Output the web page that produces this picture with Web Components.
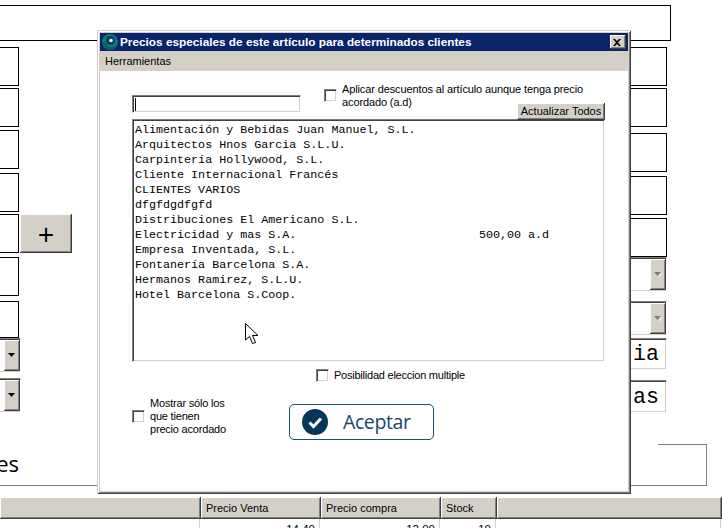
<!DOCTYPE html>
<html>
<head>
<meta charset="utf-8">
<title>Precios especiales</title>
<style>
  html, body { margin: 0; padding: 0; background: #fff; }
</style>
</head>
<body>
<x-app></x-app>

<script>
const SUNKEN = `
  border: 1px solid; border-color: #808080 #fff #fff #808080;
  box-shadow: inset 1px 1px #404040, inset -1px -1px #d4d0c8;
  box-sizing: border-box; background: #fff;`
const RAISED = `
  background: #d4d0c8; box-sizing: border-box;
  box-shadow: inset -1px -1px #404040, inset 1px 1px #fff, inset -2px -2px #808080;`
const UI_FONT = `font: 11px/13px "Liberation Sans", Arial, sans-serif; color: #000;`

// plain black-outlined field of the form behind the dialog
class XField extends HTMLElement {
  constructor() {
    super()
    this.attachShadow({ mode: 'open' })
    this.shadowRoot.innerHTML = `
      <style>
        :host { display: block; box-sizing: border-box; border: 1px solid #000; background: #fff; }
      </style>
      <slot></slot>
    `
  }
}

// sunken text box with a big monospace value, value is cut by the dialog
class XTextbox extends HTMLElement {
  constructor() {
    super()
    this.attachShadow({ mode: 'open' })
    this.shadowRoot.innerHTML = `
      <style>
        :host {
          display: flex; align-items: center; justify-content: flex-end;
          ${SUNKEN} padding: 2px 7px 0 0;
          font: 21.6px/1 "Liberation Mono", "Courier New", monospace; color: #000;
        }
      </style>
      <slot></slot>
    `
  }
}

class XCombo extends HTMLElement {
  constructor() {
    super()
    this.attachShadow({ mode: 'open' })
    const off = this.hasAttribute('disabled')
    this.shadowRoot.innerHTML = `
      <style>
        :host { display: block; ${SUNKEN} padding: 1px 0 1px 1px; }
        .row { display: flex; justify-content: flex-end; height: 100%; }
        .btn { ${RAISED} width: 16px; display: flex; align-items: center; justify-content: center; }
        .btn svg { display: block; }
      </style>
      <div class="row"><div class="btn">
        <svg width="8" height="5" viewBox="0 0 8 5">
          ${off ? '<path d="M7 1v1L4 5h1l3-3V1z" fill="#fff"/>' : ''}
          <path d="M0 0h7L3.500 4z" fill="${off ? '#808080' : '#000'}"/>
        </svg>
      </div></div>
    `
  }
}

class XCheck extends HTMLElement {
  constructor() {
    super()
    this.attachShadow({ mode: 'open' })
    this.shadowRoot.innerHTML = `
      <style>
        :host {
          display: flex; align-items: var(--check-align, center); ${UI_FONT} white-space: nowrap;
          letter-spacing: var(--check-spacing, 0);
        }
        .box { ${SUNKEN} width: 13px; height: 13px; flex: none; margin-right: 5px; margin-top: var(--check-top, 0); }
      </style>
      <div class="box"></div>
      <div><slot></slot></div>
    `
  }
}

class XButton extends HTMLElement {
  constructor() {
    super()
    this.attachShadow({ mode: 'open' })
    this.shadowRoot.innerHTML = `
      <style>
        :host { display: flex; align-items: center; justify-content: center; ${RAISED} ${UI_FONT} }
      </style>
      <slot></slot>
    `
  }
}

class XList extends HTMLElement {
  constructor() {
    super()
    this.attachShadow({ mode: 'open' })
    const rows = [
      ['Alimentación y Bebidas Juan Manuel, S.L.'],
      ['Arquitectos Hnos Garcia S.L.U.'],
      ['Carpintería Hollywood, S.L.'],
      ['Cliente Internacional Francés'],
      ['CLIENTES VARIOS'],
      ['dfgfdgdfgfd'],
      ['Distribuciones El Americano S.L.'],
      ['Electricidad y mas S.A.', '500,00 a.d'],
      ['Empresa Inventada, S.L.'],
      ['Fontanería Barcelona S.A.'],
      ['Hermanos Ramirez, S.L.U.'],
      ['Hotel Barcelona S.Coop.']
    ]
    this.shadowRoot.innerHTML = `
      <style>
        :host {
          display: block; ${SUNKEN} padding: 3px 0 0 2px;
          font: 11.7px/15px "Liberation Mono", "Courier New", monospace; color: #000;
        }
        .row { display: grid; grid-template-columns: 344px 1fr; height: 15px; white-space: pre; }
      </style>
      ${rows.map(r => `<div class="row"><span>${r[0]}</span><span>${r[1] || ''}</span></div>`).join('')}
    `
  }
}

class XDialog extends HTMLElement {
  constructor() {
    super()
    this.attachShadow({ mode: 'open' })
    this.shadowRoot.innerHTML = `
      <style>
        :host {
          display: flex; flex-direction: column; box-sizing: border-box;
          position: absolute; left: 97px; top: 30px; width: 534px; height: 464px;
          background: #d4d0c8; padding: 3px 3px 3px 3px;
          box-shadow: inset 1px 1px #d4d0c8, inset -1px -1px #404040, inset 2px 2px #fff, inset -2px -2px #808080;
        }
        .title {
          display: flex; align-items: center; height: 18px; background: #0a246a; color: #fff;
          font: bold 11.8px/18px "Liberation Sans", Arial, sans-serif; padding-left: 2px;
        }
        .title svg { flex: none; margin-right: 2px; }
        .close {
          ${RAISED} margin-left: auto; margin-right: 2px; width: 16px; height: 14px;
          display: flex; align-items: center; justify-content: center;
        }
        .menu { height: 20px; padding-left: 5px; ${UI_FONT} line-height: 20px; background: #d4d0c8; }
        .body { flex: 1; background: #fff; }
      </style>
      <div class="title">
        <svg width="16" height="16" viewBox="0 0 16 16">
          <circle cx="8" cy="8" r="8" fill="#0b7a78"/>
          <path d="M1 8a7 7 0 0 0 14 2 6 6 0 0 1-11-1z" fill="#0a5f60"/>
          <circle cx="8.500" cy="6.500" r="4.500" fill="#0a3a66"/>
          <circle cx="9" cy="6.500" r="1.800" fill="#e8f4f4"/>
        </svg>
        <slot name="title"></slot>
        <div class="close">
          <svg width="8" height="7" viewBox="0 0 8 7"><path d="M0 0h2l2 2 2-2h2L5 3.500l3 3.500H6L4 5 2 7H0l3-3.500z" fill="#000"/></svg>
        </div>
      </div>
      <div class="menu"><slot name="menu"></slot></div>
      <div class="body"><slot></slot></div>
    `
  }
}

class XAceptar extends HTMLElement {
  constructor() {
    super()
    this.attachShadow({ mode: 'open' })
    this.shadowRoot.innerHTML = `
      <style>
        :host {
          display: flex; align-items: center; box-sizing: border-box; width: 145px; height: 36px;
          border: 1px solid #14506f; border-radius: 5px; padding-left: 12px; background: #fff;
          font: 19.5px/1 "Open Sans", sans-serif; letter-spacing: -.4px; color: #16476a;
        }
        svg { margin-right: 15px; flex: none; }
      </style>
      <svg width="26" height="26" viewBox="0 0 26 26">
        <circle cx="13" cy="13" r="13" fill="#04365a"/>
        <path d="M7.500 13.500l4 4 7.500-8" fill="none" stroke="#fff" stroke-width="3"/>
      </svg>
      <slot></slot>
    `
  }
}

class XHeaderRow extends HTMLElement {
  constructor() {
    super()
    this.attachShadow({ mode: 'open' })
    const cols = ['', 'Precio Venta', 'Precio compra', 'Stock', '']
    const vals = ['', '14,40', '12,00', '10', '']
    this.shadowRoot.innerHTML = `
      <style>
        :host { display: block; ${UI_FONT} }
        .grid { display: grid; grid-template-columns: 201px 120px 120px 56px 1fr; }
        .h {
          height: 22px; box-sizing: border-box; padding-left: 5px; line-height: 22px;
          ${RAISED} box-shadow: inset -1px -1px #404040, inset 1px 1px #fff, inset -2px -2px #808080, inset 0 1px #404040;
        }
        .d {
          height: 9px; box-sizing: border-box; text-align: right; padding: 4px 4px 0 0; margin-right: 1px;
          line-height: 13px; border-right: 1px solid #d4d0c8; overflow: hidden; font-size: 11.5px;
        }
      </style>
      <div class="grid">
        ${cols.map(c => `<div class="h">${c}</div>`).join('')}
        ${vals.map(v => `<div class="d">${v}</div>`).join('')}
      </div>
    `
  }
}

class XApp extends HTMLElement {
  constructor() {
    super()
    this.attachShadow({ mode: 'open' })
    this.shadowRoot.innerHTML = `
      <style>
        :host {
          display: block; position: relative; width: 722px; height: 528px; overflow: hidden;
          background: #fff; ${UI_FONT}
        }
        .top { height: 36px; margin: 5px 0 0 -2px; width: 673px; }
        .form { display: flex; justify-content: space-between; height: 366px; margin-top: 6px; padding-right: 55px; }
        .left { width: 93px; margin-left: -21px; flex: none; }
        .left > * { width: 40px; }
        .left .wide { width: auto; display: flex; gap: 1px; }
        .left x-combo { width: 42px; }
        .right { width: 47px; flex: none; }
        .plus {
          flex: none; width: 52px; height: 39px;
          font: 29px/1 "Open Sans", sans-serif;
        }
        .f { height: 39px; }
        .c { height: 35px; }
        .group {
          height: 42px; width: 707px; margin-top: 31px; box-sizing: border-box; padding-top: 5px;
          border: solid #808080; border-width: 0 1px 1px 0;
          background: linear-gradient(#808080, #808080) top right / 48px 1px no-repeat;
        }
        .es { width: 19px; display: flex; justify-content: flex-end; font: 22px/28px "Open Sans", sans-serif; color: #000; }
        .cols { margin-top: 11px; }
        .body { display: flex; flex-direction: column; height: 100%; }
        .opts { display: flex; height: 48px; padding-left: 32px; }
        .search { ${SUNKEN} width: 169px; height: 18px; margin-top: 24px; padding: 2px 0 0 2px; flex: none; }
        .search i { display: block; width: 1px; height: 13px; background: #000; }
        .opts x-check { width: 193px; margin: 12px 0 0 23px; --check-align: flex-start; --check-top: 6px; --check-spacing: -.12px; flex: none; }
        .upd { width: 88px; height: 17px; align-self: flex-end; margin-bottom: -1px; position: relative; }
        x-list { width: 473px; height: 243px; margin-left: 32px; }
        .multi { margin: 7px 0 0 216px; --check-spacing: -.23px; }
        .foot { display: flex; margin: 10px 0 0 32px; }
        .foot x-check { width: 157px; flex: none; --check-spacing: -.2px; }
        .foot x-aceptar { margin-top: 12px; }
        .cursor { position: absolute; left: 245px; top: 323px; }
      </style>
      <x-field class="top"></x-field>
      <div class="form">
        <div class="left">
          <x-field class="f"></x-field>
          <x-field class="f" style="margin-top:2px"></x-field>
          <x-field class="f" style="margin-top:3px"></x-field>
          <x-field class="f" style="margin-top:4px"></x-field>
          <div class="wide" style="margin-top:2px">
            <x-field class="f" style="width:40px;flex:none"></x-field>
            <x-button class="plus">+</x-button>
          </div>
          <x-field class="f" style="margin-top:4px"></x-field>
          <x-field style="margin-top:5px;height:37px"></x-field>
          <x-combo class="c"></x-combo>
          <x-combo class="c" style="margin-top:5px"></x-combo>
        </div>
        <div class="right">
          <x-field class="f"></x-field>
          <x-field class="f" style="margin-top:2px"></x-field>
          <x-field class="f" style="margin-top:6px"></x-field>
          <x-field class="f" style="margin-top:4px"></x-field>
          <x-field class="f" style="margin-top:3px"></x-field>
          <x-combo class="c" disabled></x-combo>
          <x-combo class="c" disabled style="margin-top:9px"></x-combo>
          <x-textbox style="height:32px;margin-top:2px">ia</x-textbox>
          <x-textbox style="height:33px;margin-top:10px">as</x-textbox>
        </div>
      </div>
      <div class="group"><div class="es">es</div></div>
      <x-header-row class="cols"></x-header-row>

      <x-dialog>
        <span slot="title">Precios especiales de este artículo para determinados clientes</span>
        <span slot="menu">Herramientas</span>
        <div class="body">
          <div class="opts">
            <div class="search"><i></i></div>
            <x-check>Aplicar descuentos al artículo aunque tenga precio<br>acordado (a.d)</x-check>
            <x-button class="upd">Actualizar Todos</x-button>
          </div>
          <x-list></x-list>
          <x-check class="multi">Posibilidad eleccion multiple</x-check>
          <div class="foot">
            <x-check>Mostrar sólo los<br>que tienen<br>precio acordado</x-check>
            <x-aceptar>Aceptar</x-aceptar>
          </div>
        </div>
      </x-dialog>

      <svg class="cursor" width="14" height="23" viewBox="0 0 14 23">
        <path d="M.5.500v16.500l4-3.500 3 7 3-1-3-7h5.500z" fill="#fff" stroke="#000" stroke-width="1"/>
      </svg>
    `
  }
}

customElements.define('x-field', XField)
customElements.define('x-textbox', XTextbox)
customElements.define('x-combo', XCombo)
customElements.define('x-check', XCheck)
customElements.define('x-button', XButton)
customElements.define('x-list', XList)
customElements.define('x-dialog', XDialog)
customElements.define('x-aceptar', XAceptar)
customElements.define('x-header-row', XHeaderRow)
customElements.define('x-app', XApp)
</script>
</body>
</html>
